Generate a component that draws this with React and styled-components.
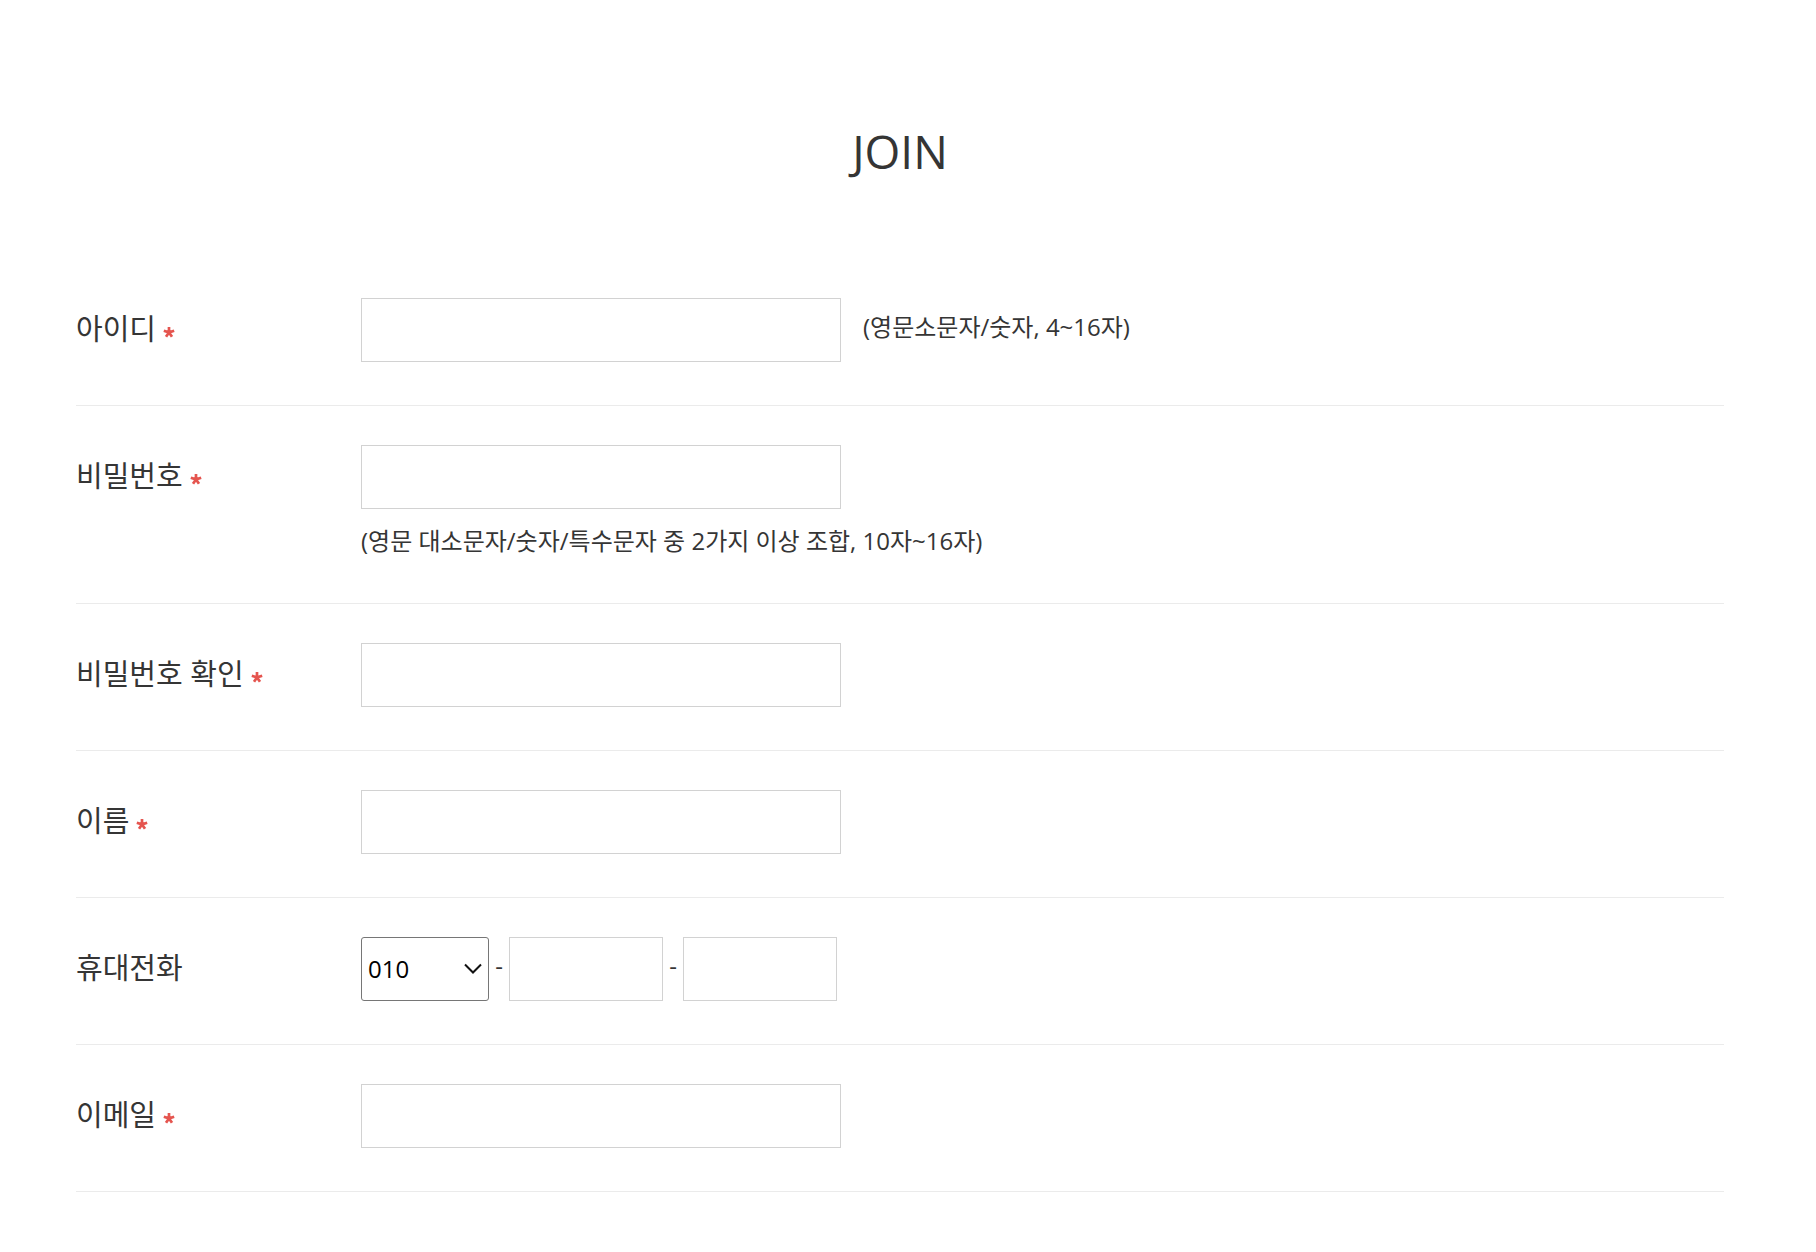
import React from "react";
import styled, { createGlobalStyle } from "styled-components";

const GlobalStyle = createGlobalStyle`
  *, *::before, *::after { box-sizing: border-box; }
  body {
    margin: 0;
    background: #fff;
    color: #353535;
    font-family: "Open Sans", "Noto Sans CJK KR", sans-serif;
  }
`;

const Page = styled.main`
  padding: 119px 92px 60px 76px;
`;

const Title = styled.h1`
  margin: 0 0 76px;
  font-size: 46px;
  font-weight: 400;
  line-height: 64px;
  text-align: center;
`;

const Row = styled.div`
  display: grid;
  grid-template-columns: 285px 1fr;
  align-items: start;
  padding: 39px 0 43px;
  border-bottom: 1px solid #ebebeb;
`;

const Label = styled.label`
  display: flex;
  align-items: center;
  gap: 7px;
  height: 62px;
  font-size: 29px;
  line-height: 40px;
`;

const Star = styled.svg`
  width: 12px;
  height: 12px;
  margin-top: 6px;
`;

const Fields = styled.div`
  display: flex;
  flex-wrap: ${(p) => (p.$stacked ? "wrap" : "nowrap")};
  align-items: center;
`;

const TextBox = styled.input`
  width: ${(p) => (p.$short ? 154 : 480)}px;
  height: 64px;
  padding: 0 12px;
  border: 1px solid #d2d2d2;
  border-radius: 0;
  background: #fff;
  color: #353535;
  font: inherit;
  font-size: 24px;
`;

const Hint = styled.p`
  margin: ${(p) => (p.$below ? "14px 0 2px" : "0 0 8px 22px")};
  flex: ${(p) => (p.$below ? "0 0 100%" : "0 1 auto")};
  font-size: 24px;
  line-height: 35px;
`;

const Dash = styled.span`
  width: 20px;
  margin-bottom: 8px;
  font-size: 24px;
  line-height: 35px;
  text-align: center;
`;

const SelectBox = styled.div`
  position: relative;
  width: 128px;
`;

const Select = styled.select`
  display: block;
  width: 100%;
  height: 64px;
  padding: 0 30px 2px 6px;
  border: 1px solid #767676;
  border-radius: 3px;
  background: #fff;
  color: #000;
  font: inherit;
  font-size: 24px;
  appearance: none;
`;

const Chevron = styled.svg`
  position: absolute;
  top: 26px;
  right: 7px;
  width: 18px;
  height: 12px;
  pointer-events: none;
`;

function Required() {
  return (
    <Star viewBox="0 0 12 12" aria-hidden="true">
      <path
        d="M6 6.4V1M6 6.4L0.8 4.8M6 6.4L11.2 4.8M6 6.4L3 10.8M6 6.4L9 10.8"
        fill="none"
        stroke="#e5554f"
        strokeWidth="2.7"
      />
    </Star>
  );
}

function FormRow({ id, label, required, stacked, children }) {
  return (
    <Row>
      <Label htmlFor={id}>
        {label}
        {required && <Required />}
      </Label>
      <Fields $stacked={stacked}>{children}</Fields>
    </Row>
  );
}

export default function App() {
  return (
    <>
      <GlobalStyle />
      <Page>
        <Title>JOIN</Title>
        <form>
          <FormRow id="member-id" label="아이디" required>
            <TextBox id="member-id" type="text" />
            <Hint>(영문소문자/숫자, 4~16자)</Hint>
          </FormRow>
          <FormRow id="password" label="비밀번호" required stacked>
            <TextBox id="password" type="password" />
            <Hint $below>(영문 대소문자/숫자/특수문자 중 2가지 이상 조합, 10자~16자)</Hint>
          </FormRow>
          <FormRow id="password-confirm" label="비밀번호 확인" required>
            <TextBox id="password-confirm" type="password" />
          </FormRow>
          <FormRow id="name" label="이름" required>
            <TextBox id="name" type="text" />
          </FormRow>
          <FormRow id="phone" label="휴대전화">
            <SelectBox>
              <Select id="phone" defaultValue="010">
                <option>010</option>
                <option>011</option>
                <option>016</option>
                <option>017</option>
                <option>018</option>
                <option>019</option>
              </Select>
              <Chevron viewBox="0 0 18 12" aria-hidden="true">
                <path d="M1 1.5L9 9.5L17 1.5" fill="none" stroke="#111" strokeWidth="2" />
              </Chevron>
            </SelectBox>
            <Dash>-</Dash>
            <TextBox $short type="tel" aria-label="휴대전화 가운데 번호" />
            <Dash>-</Dash>
            <TextBox $short type="tel" aria-label="휴대전화 끝 번호" />
          </FormRow>
          <FormRow id="email" label="이메일" required>
            <TextBox id="email" type="email" />
          </FormRow>
        </form>
      </Page>
    </>
  );
}
